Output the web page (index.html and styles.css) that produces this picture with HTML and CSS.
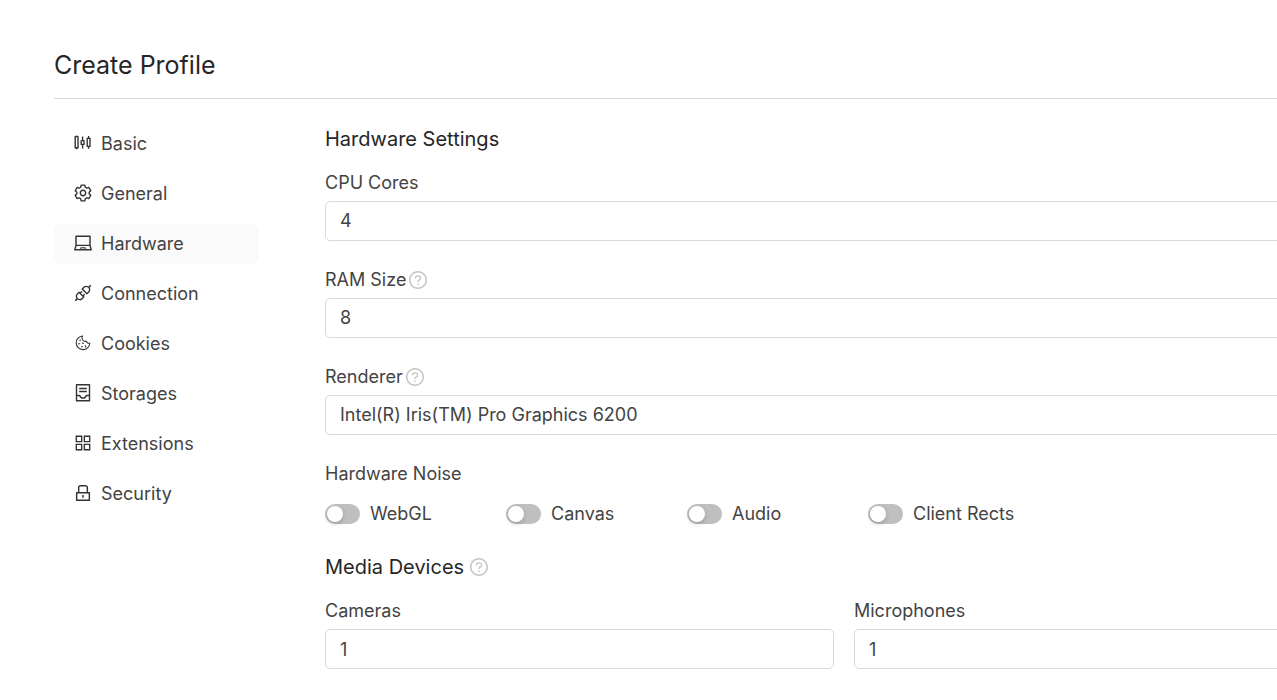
FILE: index.html
```html
<!DOCTYPE html>
<html lang="en">
<head>
<meta charset="utf-8">
<meta name="viewport" content="width=device-width, initial-scale=1">
<title>Create Profile</title>
<link rel="stylesheet" href="styles.css">
</head>
<body>
<svg class="sprite" aria-hidden="true">
  <symbol id="help" viewBox="64 64 896 896">
    <path d="M512 64C264.6 64 64 264.6 64 512s200.6 448 448 448 448-200.6 448-448S759.4 64 512 64zm0 820c-205.4 0-372-166.6-372-372s166.6-372 372-372 372 166.6 372 372-166.6 372-372 372z"/>
    <path d="M623.6 316.7C593.6 290.4 554 276 512 276s-81.6 14.5-111.6 40.7C369.2 344 352 380.7 352 420v7.6c0 4.4 3.6 8 8 8h48c4.4 0 8-3.6 8-8V420c0-44.1 43.1-80 96-80s96 35.9 96 80c0 31.1-22 59.6-56.1 72.7-21.2 8.1-39.2 22.3-52.1 40.9-13.1 19-19.9 41.8-19.9 64.9V620c0 4.4 3.6 8 8 8h48c4.4 0 8-3.6 8-8v-22.7a48.3 48.3 0 0130.9-44.8c59-22.7 97.1-74.7 97.1-132.5.1-39.3-17.1-76-48.3-103.3zM472 732a40 40 0 1080 0 40 40 0 10-80 0z"/>
  </symbol>
</svg>
<div class="page">
  <h1 class="page-title">Create Profile</h1>
  <div class="layout">
    <nav class="menu" aria-label="Profile sections">
      <a class="menu-item" href="#basic">
        <svg class="icon line" viewBox="0 0 18 18"><path d="M1.2 2.6h2.8v11.2H1.2zM2.6 1.4v1.2M2.6 13.8v1.4M8.6 2.6v4M8.6 10.4v4.2M7.2 6.6h2.8v3.8H7.2zM13.2 4.4h2.8v8h-2.8zM14.6 2v2.4M14.6 12.4v2.4"/></svg>
        Basic
      </a>
      <a class="menu-item" href="#general">
        <svg class="icon line" viewBox="-9 -9 18 18"><path d="M-1.82-7.89H1.82L2.32-5.75 3.82-4.89 5.92-5.52 7.75-2.37 6.14-.86V.86L7.75 2.37 5.92 5.52 3.82 4.89 2.32 5.75 1.82 7.89H-1.82L-2.32 5.75-3.82 4.89-5.92 5.52-7.75 2.37-6.14.86V-.86L-7.75-2.37-5.92-5.52-3.82-4.89-2.32-5.75z"/><circle r="2.7"/></svg>
        General
      </a>
      <a class="menu-item active" href="#hardware" aria-current="page">
        <svg class="icon" viewBox="64 64 896 896"><path d="M956.9 845.1L896.4 632V168c0-17.7-14.3-32-32-32h-704c-17.7 0-32 14.3-32 32v464L67.9 845.1C60.4 866 75.8 888 98 888h828.8c22.2 0 37.6-22 30.1-42.9zM200.4 208h624v395h-624V208zm228.3 608l8.1-37h150.3l8.1 37H428.7zm224 0l-19.1-86.7c-.8-3.7-4.1-6.3-7.8-6.3H398.2c-3.8 0-7 2.6-7.8 6.3L371.3 816H151l42.3-149h638.2l42.3 149H652.7z"/></svg>
        Hardware
      </a>
      <a class="menu-item" href="#connection">
        <svg class="icon" viewBox="64 64 896 896"><path d="M917.7 148.8l-42.4-42.4c-1.6-1.6-3.6-2.3-5.7-2.3s-4.1.8-5.7 2.3l-76.1 76.1a199.27 199.27 0 00-112.1-34.3c-51.2 0-102.4 19.5-141.5 58.6L432.3 308.7a8.03 8.03 0 000 11.3L704 591.7c1.6 1.6 3.6 2.3 5.7 2.3 2 0 4.1-.8 5.7-2.3l101.9-101.9c68.9-69 77-175.7 24.3-253.5l76.1-76.1c3.1-3.2 3.1-8.3 0-11.4zM769.1 441.7l-59.4 59.4-186.8-186.8 59.4-59.4c24.9-24.9 58.1-38.7 93.4-38.7 35.3 0 68.4 13.7 93.4 38.7 24.9 24.9 38.7 58.1 38.7 93.4 0 35.3-13.8 68.4-38.7 93.4zm-190.2 105a8.03 8.03 0 00-11.3 0L501 613.3 410.7 523l66.7-66.7c3.1-3.1 3.1-8.2 0-11.3L441 408.6a8.03 8.03 0 00-11.3 0L363 475.3l-43-43a7.85 7.85 0 00-5.7-2.3c-2 0-4.1.8-5.7 2.3L206.8 534.2c-68.9 69-77 175.7-24.3 253.5l-76.1 76.1a8.03 8.03 0 000 11.3l42.4 42.4c1.6 1.6 3.6 2.3 5.7 2.3s4.1-.8 5.7-2.3l76.1-76.1c33.7 22.9 72.9 34.3 112.1 34.3 51.2 0 102.4-19.5 141.5-58.6l101.9-101.9c3.1-3.1 3.1-8.2 0-11.3l-43-43 66.7-66.7c3.1-3.1 3.1-8.2 0-11.3l-36.6-36.2zM441.7 769.1a131.32 131.32 0 01-93.4 38.7c-35.3 0-68.4-13.7-93.4-38.7a131.32 131.32 0 01-38.7-93.4c0-35.3 13.7-68.4 38.7-93.4l59.4-59.4 186.8 186.8-59.4 59.4z"/></svg>
        Connection
      </a>
      <a class="menu-item" href="#cookies">
        <svg class="icon thin" viewBox="0 0 18 18"><path d="M8.6 2A6.8 6.8 0 1 0 15.8 9.2 2.7 2.7 0 0 1 12.4 7.2 3.4 3.4 0 0 1 8.6 2z"/><path d="M6.1 5.7v1M4.6 9.8h1M8.6 9l.7.5M7.6 12.8h1M11.6 11.9v1"/></svg>
        Cookies
      </a>
      <a class="menu-item" href="#storages">
        <svg class="icon line" viewBox="0 0 18 18"><path d="M2.5.8h13v16h-13zM5.2 4.5h7.6M5.2 7.5h7.6M2.5 11.5h3.2a3.4 3.4 0 0 0 6.6 0h3.2"/></svg>
        Storages
      </a>
      <a class="menu-item" href="#extensions">
        <svg class="icon" viewBox="64 64 896 896"><path fill-rule="evenodd" d="M144 144h336v336H144zM212 212v200h200V212zM544 144h336v336H544zM612 212v200h200V212zM144 544h336v336H144zM212 612v200h200V612zM544 544h336v336H544zM612 612v200h200V612z"/></svg>
        Extensions
      </a>
      <a class="menu-item" href="#security">
        <svg class="icon" viewBox="64 64 896 896"><path d="M832 464h-68V240c0-70.7-57.3-128-128-128H388c-70.7 0-128 57.3-128 128v224h-68c-17.7 0-32 14.3-32 32v384c0 17.7 14.3 32 32 32h640c17.7 0 32-14.3 32-32V496c0-17.7-14.3-32-32-32zM332 240c0-30.9 25.1-56 56-56h248c30.9 0 56 25.1 56 56v224H332V240zm460 600H232V536h560v304zM484 701v53c0 4.4 3.6 8 8 8h40c4.4 0 8-3.6 8-8v-53a48.01 48.01 0 10-56 0z"/></svg>
        Security
      </a>
    </nav>
    <main>
      <form class="form">
        <h2 class="section-title">Hardware Settings</h2>
        <div class="field">
          <label class="label" for="cpu">CPU Cores</label>
          <select class="control" id="cpu"><option>4</option></select>
        </div>
        <div class="field">
          <label class="label" for="ram">RAM Size <svg class="help"><use href="#help"/></svg></label>
          <select class="control" id="ram"><option>8</option></select>
        </div>
        <div class="field">
          <label class="label" for="renderer">Renderer <svg class="help"><use href="#help"/></svg></label>
          <select class="control" id="renderer"><option>Intel(R) Iris(TM) Pro Graphics 6200</option></select>
        </div>
        <div class="noise" role="group" aria-labelledby="noise">
          <div class="label" id="noise">Hardware Noise</div>
          <div class="switches">
            <label class="switch-row"><input class="switch" type="checkbox" role="switch">WebGL</label>
            <label class="switch-row"><input class="switch" type="checkbox" role="switch">Canvas</label>
            <label class="switch-row"><input class="switch" type="checkbox" role="switch">Audio</label>
            <label class="switch-row"><input class="switch" type="checkbox" role="switch">Client Rects</label>
          </div>
        </div>
        <h2 class="section-title">Media Devices <svg class="help"><use href="#help"/></svg></h2>
        <div class="columns">
          <div class="field">
            <label class="label" for="cameras">Cameras</label>
            <input class="control" id="cameras" type="text" inputmode="numeric" value="1">
          </div>
          <div class="field">
            <label class="label" for="microphones">Microphones</label>
            <input class="control" id="microphones" type="text" inputmode="numeric" value="1">
          </div>
        </div>
      </form>
    </main>
  </div>
</div>
</body>
</html>
```
FILE: styles.css
```css
* {
  box-sizing: border-box;
}

body {
  margin: 0;
  overflow-x: hidden;
  background: #fff;
  color: #434343;
  font: 18px/24px Inter, "Liberation Sans", sans-serif;
}

.sprite {
  display: none;
}

/* The form runs past the right edge of the window. */
.page {
  width: calc(100% + 86px);
  padding: 48px 0 0 54px;
}

.page-title {
  margin: 0;
  padding-bottom: 16px;
  border-bottom: 1px solid #d9d9d9;
  color: #262626;
  font-size: 25px;
  font-weight: 400;
  line-height: 34px;
}

.layout {
  display: grid;
  grid-template-columns: 205px 1fr;
  gap: 66px;
  padding-top: 25px;
}

.menu {
  display: flex;
  flex-direction: column;
  gap: 10px;
}

.menu-item {
  display: flex;
  align-items: center;
  gap: 9px;
  height: 40px;
  padding: 0 20px;
  border-radius: 8px;
  color: #434343;
  text-decoration: none;
}

.menu-item.active {
  background: #fafafa;
}

.icon {
  flex: none;
  width: 18px;
  height: 18px;
  margin-bottom: 2px;
  fill: #333;
}

.line,
.thin {
  fill: none;
  stroke: #333;
  stroke-width: 1.4;
  stroke-linejoin: round;
}

.thin {
  stroke-width: 1.1;
  stroke-linecap: round;
}

.form {
  padding-top: 1px;
}

.section-title {
  display: flex;
  align-items: center;
  gap: 6px;
  margin: 0 0 18px;
  color: #262626;
  font-size: 20px;
  font-weight: 400;
  line-height: 28px;
}

.field {
  margin-bottom: 27px;
}

.label {
  display: flex;
  align-items: center;
  gap: 3px;
  margin-bottom: 6px;
}

.help {
  width: 18px;
  height: 18px;
  fill: #c4c4c4;
}

.control {
  display: block;
  width: 100%;
  height: 40px;
  padding: 0 14px;
  border: 1px solid #d9d9d9;
  border-radius: 5px;
  background: #fff;
  color: #434343;
  font: inherit;
  appearance: none;
}

.noise {
  margin-bottom: 27px;
}

.switches {
  display: grid;
  grid-template-columns: repeat(auto-fill, 181px);
  padding-top: 10px;
}

.switch-row {
  display: flex;
  align-items: center;
  gap: 10px;
}

.switch {
  flex: none;
  width: 35px;
  height: 20px;
  margin: 0;
  padding: 2px;
  border-radius: 10px;
  background: #bfbfbf;
  appearance: none;
}

.switch::before {
  content: "";
  display: block;
  width: 16px;
  height: 16px;
  border-radius: 50%;
  background: #fff;
  box-shadow: 0 2px 4px rgba(0, 35, 11, 0.2);
}

.switch:checked {
  background: #1890ff;
}

.switch:checked::before {
  margin-left: auto;
}

.columns {
  display: grid;
  grid-template-columns: 1fr 1fr;
  gap: 20px;
}
```
